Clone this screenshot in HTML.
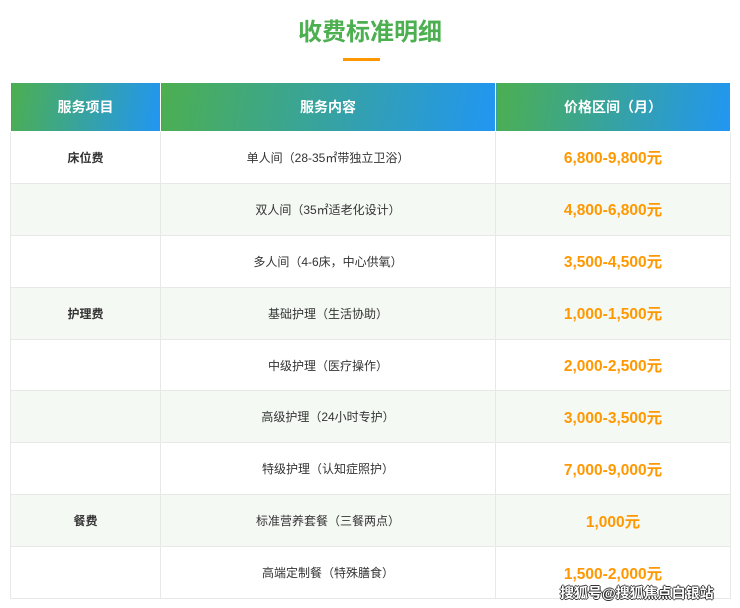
<!DOCTYPE html>
<html><head><meta charset="utf-8"><style>
body{margin:0;width:740px;height:608px;background:#fff;font-family:"Liberation Sans","Noto Sans CJK SC",sans-serif;position:relative;overflow:hidden}
.title{position:absolute;top:15px;left:0;width:740px;text-align:center;color:#4caf50;font-size:24px;font-weight:bold;line-height:36px}
.line{position:absolute;left:343px;top:58px;width:37px;height:3px;background:#ff9800}
table{position:absolute;left:10px;top:82px;width:720px;border-collapse:collapse;table-layout:fixed}
td,th{border:1px solid #e6e9e6;text-align:center;padding:0}
th{height:48px;color:#fff;font-size:14px;font-weight:bold;background:linear-gradient(100deg,#4caf50,#2196f3);border-color:#fff}
td{height:50.9px;font-size:12px;color:#333}
tr:nth-child(odd) td{background:#f5f9f4}
td.c1{font-weight:bold}
td.p{color:#ff9800;font-weight:bold;font-size:15.5px}
.wm{position:absolute;left:560px;top:583px;font-size:14px;color:#fff;font-weight:bold;text-shadow:-1px 0 #333,1px 0 #333,0 -1px #333,0 1px #333}
</style></head><body>
<div class="title">收费标准明细</div>
<div class="line"></div>
<table>
<colgroup><col style="width:150px"><col style="width:335px"><col style="width:235px"></colgroup>
<tr><th>服务项目</th><th>服务内容</th><th>价格区间（月）</th></tr>
<tr><td class="c1">床位费</td><td>单人间（28-35㎡带独立卫浴）</td><td class="p">6,800-9,800元</td></tr>
<tr><td></td><td>双人间（35㎡适老化设计）</td><td class="p">4,800-6,800元</td></tr>
<tr><td></td><td>多人间（4-6床，中心供氧）</td><td class="p">3,500-4,500元</td></tr>
<tr><td class="c1">护理费</td><td>基础护理（生活协助）</td><td class="p">1,000-1,500元</td></tr>
<tr><td></td><td>中级护理（医疗操作）</td><td class="p">2,000-2,500元</td></tr>
<tr><td></td><td>高级护理（24小时专护）</td><td class="p">3,000-3,500元</td></tr>
<tr><td></td><td>特级护理（认知症照护）</td><td class="p">7,000-9,000元</td></tr>
<tr><td class="c1">餐费</td><td>标准营养套餐（三餐两点）</td><td class="p">1,000元</td></tr>
<tr><td></td><td>高端定制餐（特殊膳食）</td><td class="p">1,500-2,000元</td></tr>
</table>
<div class="wm">搜狐号@搜狐焦点白银站</div>
</body></html>
